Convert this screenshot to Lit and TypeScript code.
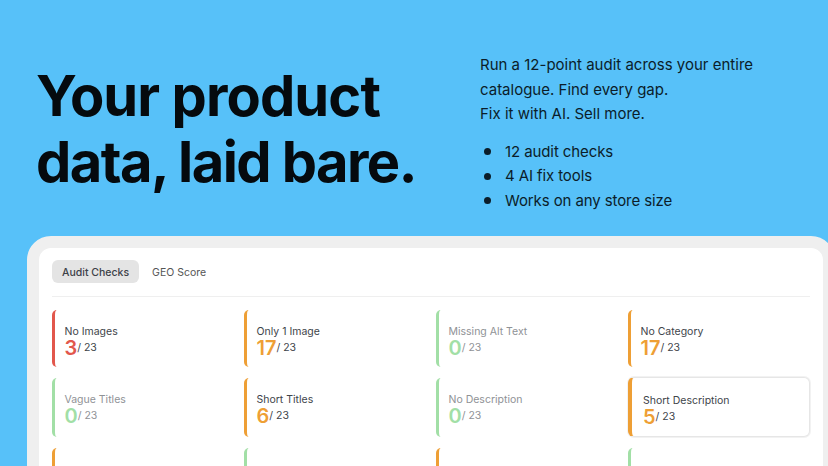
import { LitElement, html, css, nothing } from "lit";
import { customElement } from "lit/decorators.js";

type Tone = "red" | "orange" | "green";
interface Check { label?: string; value?: number; tone: Tone; selected?: boolean }

// The third row is cut by the bottom edge of the window: only its bars show.
const CHECKS: Check[] = [
  { label: "No Images", value: 3, tone: "red" },
  { label: "Only 1 Image", value: 17, tone: "orange" },
  { label: "Missing Alt Text", value: 0, tone: "green" },
  { label: "No Category", value: 17, tone: "orange" },
  { label: "Vague Titles", value: 0, tone: "green" },
  { label: "Short Titles", value: 6, tone: "orange" },
  { label: "No Description", value: 0, tone: "green" },
  { label: "Short Description", value: 5, tone: "orange", selected: true },
  { tone: "orange" },
  { tone: "green" },
  { tone: "orange" },
  { tone: "green" },
];

@customElement("app-root")
export class AppRoot extends LitElement {
  static styles = css`
    :host {
      display: block;
      width: 828px;
      height: 466px;
      overflow: hidden;
      background: #57c1f9;
      font-family: Inter, "Liberation Sans", sans-serif;
    }
    .hero {
      height: 236px;
      box-sizing: border-box;
      display: flex;
      padding: 53px 0 0 36px;
    }
    h1 {
      width: 444px;
      margin: 10px 0 0;
      font-size: 56px;
      line-height: 66px;
      font-weight: 700;
      letter-spacing: -0.9px;
      color: #050a0e;
    }
    .tight { letter-spacing: -1.55px; }
    .side { color: #0b1d2a; font-size: 15px; line-height: 24.5px; }
    .side p { margin: 0; }
    .side ul { margin: 13px 0 0; padding: 0; list-style: none; letter-spacing: -0.1px; }
    .side li { display: flex; align-items: center; gap: 14px; padding-left: 4px; }
    .side li::before {
      content: "";
      width: 7px;
      height: 7px;
      border-radius: 50%;
      background: #0b1d2a;
      flex: none;
    }
    .frame {
      margin-left: 27px;
      width: 808px;
      height: 260px;
      box-sizing: border-box;
      border: 12px solid #efefef;
      border-radius: 24px;
      background: #fff;
      padding: 12px 13px;
    }
    .tabs {
      display: flex;
      gap: 13px;
      padding-bottom: 13px;
      border-bottom: 1px solid #efefef;
      font-size: 10.5px;
      color: #555;
    }
    .tab { height: 23px; display: flex; align-items: center; border-radius: 6px; padding-top: 1px; box-sizing: border-box; }
    .tab.on { background: #e4e4e4; padding: 1px 10px 0; color: #3c4148; font-weight: 500; }
    .grid {
      margin-top: 13px;
      display: grid;
      grid-template-columns: repeat(4, 182px);
      column-gap: 10px;
      row-gap: 11px;
    }
    .card {
      box-sizing: border-box;
      min-height: 57px;
      border-left: 3.5px solid;
      border-radius: 5px;
      padding: 16px 10px 0 9.5px;
      color: #40444a;
      background: #fff;
    }
    .card.red { border-color: #e2574c; --n: #e2574c; }
    .card.orange { border-color: #ee9f35; --n: #ee9f35; }
    .card.green { border-color: #a2dfa6; --n: #a2dfa6; color: #8f9296; }
    .card.sel {
      min-height: 60px;
      margin-top: -1px;
      border: 1px solid #e6e6e6;
      border-left: 4px solid #ee9f35;
      border-radius: 6px;
      padding: 17px 10px 0 11px;
      box-shadow: 0 0 0 1px #f2f2f2;
    }
    .label { font-size: 10.5px; line-height: 12px; }
    .count { display: flex; align-items: center; height: 18px; margin-top: 1px; }
    .n { font-size: 20px; line-height: 18px; font-weight: 600; color: var(--n); }
    .of { font-size: 10.5px; line-height: 12px; }
  `;

  render() {
    return html`
      <section class="hero">
        <h1>Your product<br /><span class="tight">data, laid bare.</span></h1>
        <div class="side">
          <p>Run a 12-point audit across your entire<br />catalogue. Find every gap.<br />Fix it with AI. Sell more.</p>
          <ul>
            <li>12 audit checks</li>
            <li>4 AI fix tools</li>
            <li>Works on any store size</li>
          </ul>
        </div>
      </section>
      <section class="frame">
        <div class="tabs">
          <div class="tab on">Audit Checks</div>
          <div class="tab">GEO Score</div>
        </div>
        <div class="grid">
          ${CHECKS.map(
            (c) => html`
              <div class="card ${c.tone} ${c.selected ? "sel" : ""}">
                ${c.label
                  ? html`<div class="label">${c.label}</div>
                      <div class="count"><span class="n">${c.value}</span><span class="of">/ 23</span></div>`
                  : nothing}
              </div>
            `
          )}
        </div>
      </section>
    `;
  }
}
